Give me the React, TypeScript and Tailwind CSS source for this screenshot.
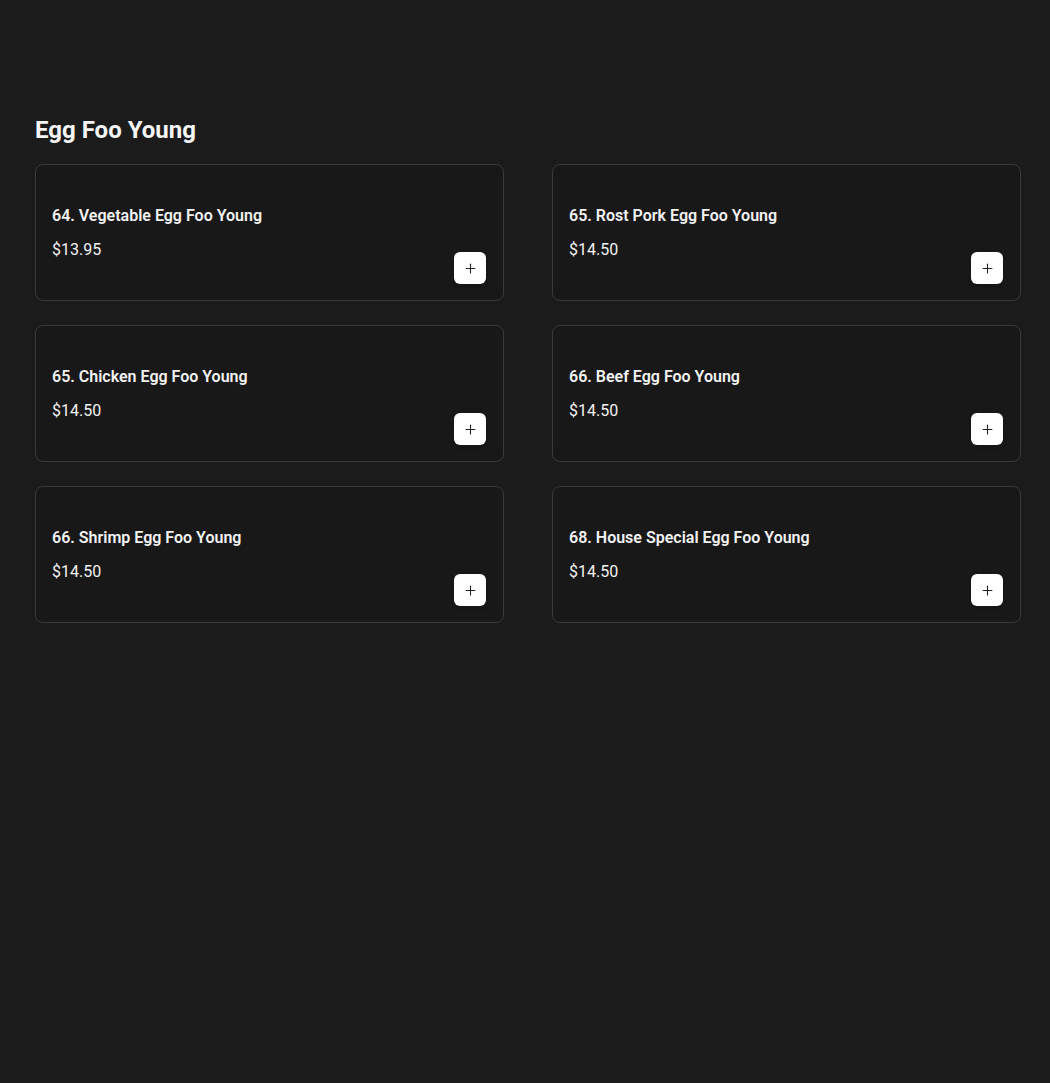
import React from "react";
import { Plus } from "lucide-react";

type Dish = { name: string; price: string };

const dishes: Dish[] = [
  { name: "64. Vegetable Egg Foo Young", price: "$13.95" },
  { name: "65. Rost Pork Egg Foo Young", price: "$14.50" },
  { name: "65. Chicken Egg Foo Young", price: "$14.50" },
  { name: "66. Beef Egg Foo Young", price: "$14.50" },
  { name: "66. Shrimp Egg Foo Young", price: "$14.50" },
  { name: "68. House Special Egg Foo Young", price: "$14.50" },
];

const DishCard = ({ dish }: { dish: Dish }) => (
  <div className="flex items-end justify-between rounded-lg border border-[#3a3a3a] bg-[#181818] pl-4 pr-[17px] pt-[39px] pb-4">
    <div className="mb-[22px] flex flex-col">
      <span className="text-base leading-6 font-semibold text-[#f2f2f2]">{dish.name}</span>
      <span className="mt-[10px] text-base leading-6 text-[#f2f2f2]">{dish.price}</span>
    </div>
    <button className="flex h-8 w-8 items-center justify-center rounded-md bg-white text-[#222] shadow-md">
      <Plus size={15} strokeWidth={1.75} />
    </button>
  </div>
);

const App = () => {
  return (
    <div
      className="min-h-[1083px] bg-[#1b1b1b] pt-[114px] pl-[35px] pr-[29px]"
      style={{ fontFamily: "Roboto, 'Liberation Sans', sans-serif" }}
    >
      <h2 className="mb-[18px] text-2xl leading-8 font-bold text-[#f5f5f5]">Egg Foo Young</h2>
      <div className="grid grid-cols-2 gap-x-12 gap-y-6">
        {dishes.map((d, i) => (
          <DishCard key={i} dish={d} />
        ))}
      </div>
    </div>
  );
};

export default App;
